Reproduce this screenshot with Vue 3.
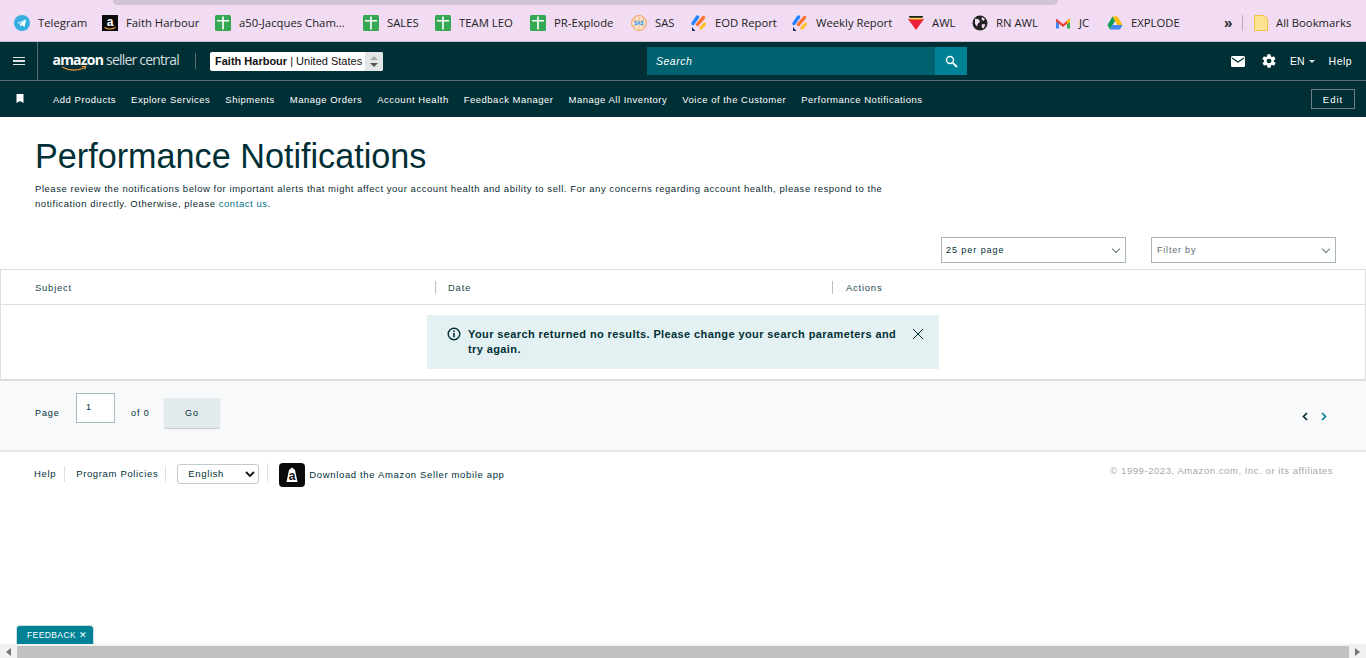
<template>
  <div class="page">
    <div class="bookmarks">
      <div class="tab-sliver"></div>
      <div class="bm-list">
        <a v-for="b in bookmarks" :key="b.name" class="bm" :style="{ width: b.w + 'px' }">
          <svg width="16" height="16" viewBox="0 0 16 16" class="bm-icon">
            <template v-if="b.icon === 'telegram'">
              <circle cx="8" cy="8" r="8" fill="#37aee2" />
              <path d="M3 8l9-3.600-1.400 7.600-2.900-2.100-1.400 1.500-.3-2.400 4.200-3.500-5.300 3.100z" fill="#fff" />
            </template>
            <template v-else-if="b.icon === 'amazon'">
              <rect width="16" height="16" fill="#0b0b0b" />
              <text x="8" y="11" text-anchor="middle" class="a-letter">a</text>
              <path d="M2.500 12.500q5.500 3 11 0" stroke="#f19e38" stroke-width="1.200" fill="none" />
            </template>
            <template v-else-if="b.icon === 'sheet'">
              <rect width="16" height="16" rx="1.500" fill="#34a853" />
              <path d="M2 5h12v1.600H2zM7.200 1.500h1.600v13H7.200z" fill="#fff" />
            </template>
            <template v-else-if="b.icon === 'sas'">
              <circle cx="8" cy="8" r="7.500" fill="#fbe3cf" stroke="#f2a766" />
              <path d="M1 6h14M1 10.500h14M8 .5v15M4 2q-2 6 0 12M12 2q2 6 0 12" stroke="#f2a766" stroke-width=".7" fill="none" />
              <rect x="2.500" y="6" width="11" height="4.500" fill="#dcecf7" />
              <text x="8" y="9.800" text-anchor="middle" class="sas-letter">SAS</text>
            </template>
            <template v-else-if="b.icon === 'eod'">
              <path d="M2 8.500L6.500 2" stroke="#2684ff" stroke-width="3.400" stroke-linecap="round" />
              <path d="M6.500 9.500L12.500 2.500" stroke="#ff6f2c" stroke-width="3.400" stroke-linecap="round" />
              <path d="M10 13L13.500 9" stroke="#ffc02e" stroke-width="3.400" stroke-linecap="round" />
              <path d="M1 12l3.500 4H1z" fill="#172b6b" />
            </template>
            <template v-else-if="b.icon === 'awl'">
              <path d="M1 1h14l-1 3H2z" fill="#222" />
              <path d="M0 4h16L8 15z" fill="#ee1f3b" />
              <path d="M2 2.800h12v1.700H2z" fill="#f7d84a" />
            </template>
            <template v-else-if="b.icon === 'globe'">
              <circle cx="8" cy="8" r="7.500" fill="#222" />
              <path d="M3 3.500l4 1 1 2.500-2 1.500-1 3-2-2.500zM10 2l3 2-1.500 2L9.500 4.500zM10 9l3.500.5-2 4-2-1.500z" fill="#f1dcf3" />
            </template>
            <template v-else-if="b.icon === 'gmail'">
              <path d="M1 3.500v10h3V7z" fill="#4285f4" />
              <path d="M15 3.500v10h-3V7z" fill="#34a853" />
              <path d="M1 3.500L8 9l7-5.500v3L8 12 1 6.500z" fill="#ea4335" />
              <path d="M12 5.500l3-2.200V7l-3 2.200z" fill="#fbbc04" />
            </template>
            <template v-else>
              <path d="M5.500 1.500h5L15.500 10h-5z" fill="#fbbc04" />
              <path d="M5.500 1.500L.5 10 3 14.500 8 6z" fill="#0f9d58" />
              <path d="M3 14.500h10l2.500-4.500h-10z" fill="#4285f4" />
            </template>
          </svg>
          <span>{{ b.name }}</span>
        </a>
      </div>
      <span class="bm-more">»</span>
      <span class="bm-divider"></span>
      <svg width="14" height="16" viewBox="0 0 14 16" class="bm-folder">
        <path d="M.5.500h9l4 3v12H.5z" fill="#fde293" stroke="#f0c544" />
      </svg>
      <span class="bm-all">All Bookmarks</span>
    </div>

    <header class="topbar">
      <div class="top-left">
        <button class="burger"><i></i><i></i><i></i></button>
        <div class="logo">
          <span class="logo-amazon">amazon</span>
          <span class="logo-rest">seller central</span>
          <svg class="logo-smile" width="26" height="6" viewBox="0 0 26 6">
            <path d="M1 1q11 6 23 .5" stroke="#f19e38" stroke-width="1.300" fill="none" />
            <path d="M21 .5l4-.2-1.300 3.200" stroke="#f19e38" stroke-width="1" fill="none" />
          </svg>
        </div>
        <span class="logo-sep"></span>
        <div class="account">
          <span class="account-text"><b>Faith Harbour</b> | United States</span>
          <span class="account-step">
            <svg width="10" height="13" viewBox="0 0 10 13">
              <path d="M5 1l4 4H1z" fill="#aaa" />
              <path d="M5 12l4-4H1z" fill="#555" />
            </svg>
          </span>
        </div>
      </div>
      <div class="search">
        <span class="search-input">Search</span>
        <button class="search-btn">
          <svg width="13" height="13" viewBox="0 0 13 13">
            <circle cx="5" cy="5" r="3.500" stroke="#fff" stroke-width="1.400" fill="none" />
            <path d="M7.800 7.800L12 12" stroke="#fff" stroke-width="1.800" />
          </svg>
        </button>
      </div>
      <div class="top-right">
        <svg width="14" height="11" viewBox="0 0 14 11">
          <rect width="14" height="11" rx="1.500" fill="#fff" />
          <path d="M1 2l6 4 6-4" stroke="#002f36" stroke-width="1.200" fill="none" />
        </svg>
        <svg class="gear" width="16" height="16" viewBox="0 0 24 24">
          <path fill="#fff" d="M19.400 13c.1-.3.100-.7.100-1s0-.7-.1-1l2.100-1.600c.2-.2.200-.4.100-.6l-2-3.500c-.1-.2-.4-.3-.6-.2l-2.500 1c-.5-.4-1.100-.7-1.700-1l-.4-2.600c0-.3-.2-.5-.5-.5h-4c-.3 0-.5.200-.5.500l-.4 2.600c-.6.300-1.200.6-1.700 1l-2.500-1c-.2-.1-.5 0-.6.200l-2 3.500c-.1.200-.1.400.1.600L4.600 11c-.1.300-.1.700-.1 1s0 .7.100 1l-2.100 1.600c-.2.200-.2.400-.1.600l2 3.500c.1.200.4.300.6.200l2.500-1c.5.400 1.100.7 1.700 1l.4 2.600c0 .3.200.5.500.5h4c.3 0 .5-.2.500-.5l.4-2.600c.6-.3 1.200-.6 1.700-1l2.500 1c.2.100.5 0 .6-.2l2-3.500c.1-.2.100-.4-.1-.6zM12 15.500a3.500 3.500 0 110-7 3.500 3.500 0 010 7z" />
        </svg>
        <span class="lang">EN<i class="caret"></i></span>
        <span class="help">Help</span>
      </div>
    </header>

    <nav class="subnav">
      <svg class="nav-mark" width="8" height="9" viewBox="0 0 8 9">
        <path d="M.5 0h7v9L4 7 .5 9z" fill="#fff" />
      </svg>
      <div class="nav-links">
        <a v-for="link in navLinks" :key="link">{{ link }}</a>
      </div>
      <button class="edit-btn">Edit</button>
    </nav>

    <main>
      <div class="intro">
        <h1>Performance Notifications</h1>
        <p>Please review the notifications below for important alerts that might affect your account health and ability to sell. For any concerns regarding account health, please respond to the notification directly. Otherwise, please <a>contact us</a>.</p>
      </div>

      <div class="filters">
        <div class="fake-select dark">25 per page<i class="chev"></i></div>
        <div class="fake-select">Filter by<i class="chev"></i></div>
      </div>

      <section class="table">
        <div class="thead">
          <div class="th first">Subject</div>
          <div class="th second">Date</div>
          <div class="th third">Actions</div>
        </div>
        <div class="tbody">
          <div class="alert">
            <svg class="alert-icon" width="14" height="14" viewBox="0 0 14 14">
              <circle cx="7" cy="7" r="5.800" stroke="#002f36" stroke-width="1.400" fill="none" />
              <rect x="6.200" y="6" width="1.600" height="4.200" fill="#002f36" />
              <rect x="6.200" y="3.400" width="1.600" height="1.600" fill="#002f36" />
            </svg>
            <p>Your search returned no results. Please change your search parameters and try again.</p>
            <svg class="alert-close" width="12" height="12" viewBox="0 0 12 12">
              <path d="M1 1l10 10M11 1L1 11" stroke="#002f36" stroke-width="1" />
            </svg>
          </div>
        </div>
      </section>

      <section class="pager">
        <span class="pg-label">Page</span>
        <span class="pg-input">1</span>
        <span class="pg-of">of 0</span>
        <button class="pg-go">Go</button>
        <span class="pg-arrows">
          <svg width="6" height="9" viewBox="0 0 6 9"><path d="M5 1L1.500 4.500 5 8" stroke="#002f36" stroke-width="1.700" fill="none" /></svg>
          <svg width="6" height="9" viewBox="0 0 6 9"><path d="M1 1l3.500 3.500L1 8" stroke="#008296" stroke-width="1.700" fill="none" /></svg>
        </span>
      </section>

      <footer class="foot">
        <a class="f-help">Help</a>
        <a class="f-policy">Program Policies</a>
        <div class="f-lang">English
          <svg width="10" height="6" viewBox="0 0 10 6"><path d="M1 1l4 4 4-4" stroke="#111" stroke-width="1.800" fill="none" /></svg>
        </div>
        <span class="f-app">
          <svg width="12" height="16" viewBox="0 0 12 16"><path d="M3 3l3-2.500L9 3l2.500 12h-11z" fill="#fff" /></svg>
          <b>a</b>
        </span>
        <a class="f-download">Download the Amazon Seller mobile app</a>
        <span class="f-copy">© 1999-2023, Amazon.com, Inc. or its affiliates</span>
      </footer>
    </main>

    <div class="feedback">FEEDBACK <span>✕</span></div>
    <div class="hscroll">
      <span class="arrow left"></span>
      <span class="thumb"></span>
      <span class="arrow right"></span>
    </div>
  </div>
</template>

<script setup>
const bookmarks = [
  { name: 'Telegram', icon: 'telegram', w: 88 },
  { name: 'Faith Harbour', icon: 'amazon', w: 113 },
  { name: 'a50-Jacques Cham...', icon: 'sheet', w: 148 },
  { name: 'SALES', icon: 'sheet', w: 72 },
  { name: 'TEAM LEO', icon: 'sheet', w: 95 },
  { name: 'PR-Explode', icon: 'sheet', w: 101 },
  { name: 'SAS', icon: 'sas', w: 60 },
  { name: 'EOD Report', icon: 'eod', w: 101 },
  { name: 'Weekly Report', icon: 'eod', w: 116 },
  { name: 'AWL', icon: 'awl', w: 64 },
  { name: 'RN AWL', icon: 'globe', w: 83 },
  { name: 'JC', icon: 'gmail', w: 52 },
  { name: 'EXPLODE', icon: 'drive', w: 90 },
]

const navLinks = [
  'Add Products',
  'Explore Services',
  'Shipments',
  'Manage Orders',
  'Account Health',
  'Feedback Manager',
  'Manage All Inventory',
  'Voice of the Customer',
  'Performance Notifications',
]
</script>

<style>
html,
body {
  margin: 0;
  background: #fff;
}
</style>

<style scoped>
.page {
  position: relative;
  height: 658px;
  overflow: hidden;
  font-family: "Liberation Sans", Arial, sans-serif;
  color: #002f36;
}

/* browser bookmarks bar */
.bookmarks {
  position: relative;
  display: flex;
  align-items: center;
  height: 42px;
  padding: 4px 0 0 14px;
  box-sizing: border-box;
  background: #f1dcf3;
  border-bottom: 1px solid #cdbbd0;
  font-family: "Open Sans", sans-serif;
  font-size: 11.300px;
  color: #222;
  white-space: nowrap;
}
.tab-sliver {
  position: absolute;
  left: 113px;
  top: 0;
  width: 945px;
  height: 5px;
  background: #d3c3d6;
  border-radius: 0 0 10px 10px;
}
.bm-list {
  display: flex;
  width: 1210px;
}
.bm {
  display: flex;
  align-items: center;
  gap: 8px;
}
.bm-icon {
  flex: none;
}
.a-letter {
  font: bold 12px "Liberation Sans", sans-serif;
  fill: #fff;
}
.sas-letter {
  font: bold 4.500px "Liberation Sans", sans-serif;
  fill: #1d7fc4;
}
.bm-more {
  font-size: 14px;
  font-weight: 700;
  line-height: 16px;
  width: 18px;
  color: #333;
}
.bm-divider {
  width: 1px;
  height: 16px;
  background: #b9adbb;
  margin-right: 11px;
}
.bm-folder {
  margin-right: 8px;
}

/* seller central header */
.topbar {
  display: flex;
  align-items: center;
  height: 38px;
  background: #002f36;
  border-bottom: 1px solid #596e72;
  color: #fff;
}
.top-left {
  display: flex;
  align-items: center;
  width: 647px;
  height: 100%;
}
.burger {
  display: flex;
  flex-direction: column;
  justify-content: center;
  gap: 2px;
  width: 38px;
  height: 100%;
  padding: 0 13px;
  box-sizing: border-box;
  background: none;
  border: 0;
  border-right: 1px solid #596e72;
}
.burger i {
  display: block;
  height: 1.500px;
  width: 12px;
  background: #dfe5e5;
}
.logo {
  position: relative;
  margin-left: 14.500px;
  width: 128.500px;
  font-family: "Open Sans", sans-serif;
  font-size: 14px;
  line-height: 20px;
  white-space: nowrap;
  margin-top: -3px;
  letter-spacing: -0.8px;
}
.logo-amazon {
  font-weight: 700;
  margin-right: 3px;
}
.logo-rest {
  color: #d5dcdd;
}
.logo-smile {
  position: absolute;
  left: 8px;
  top: 16px;
}
.logo-sep {
  width: 1px;
  height: 16px;
  background: #596e72;
  margin: 0 14px;
}
.account {
  display: flex;
  align-items: stretch;
  width: 173px;
  height: 19px;
  background: #fff;
  border-radius: 2px;
  color: #111;
  font-size: 11px;
  line-height: 19px;
  overflow: hidden;
}
.account-text {
  flex: 1;
  padding-left: 5px;
  white-space: nowrap;
}
.account-step {
  display: flex;
  align-items: center;
  justify-content: center;
  width: 18px;
  background: #e3e6e6;
}
.search {
  display: flex;
  width: 320px;
  height: 28px;
}
.search-input {
  flex: 1;
  padding-left: 9px;
  background: #00626f;
  font-size: 10.500px;
  font-style: italic;
  line-height: 28px;
  letter-spacing: .5px;
}
.search-btn {
  display: flex;
  align-items: center;
  justify-content: center;
  width: 32px;
  padding: 0;
  border: 0;
  background: #008296;
}
.top-right {
  display: flex;
  align-items: center;
  margin-left: 264px;
  font-size: 10.500px;
}
.gear {
  margin-left: 16px;
}
.lang {
  display: flex;
  align-items: center;
  margin-left: 13px;
  gap: 4px;
}
.caret {
  width: 0;
  height: 0;
  border: 3.500px solid transparent;
  border-top: 3.500px solid #dfe5e5;
  border-bottom: 0;
}
.help {
  margin-left: 14px;
  letter-spacing: .5px;
}

/* sub navigation */
.subnav {
  display: flex;
  align-items: center;
  height: 36px;
  background: #002f36;
  color: #fff;
  font-size: 9.500px;
  letter-spacing: .5px;
  white-space: nowrap;
}
.nav-mark {
  margin-left: 16px;
  margin-top: -2px;
}
.nav-links {
  display: flex;
  gap: 15px;
  margin-left: 29px;
  flex: 1;
}
.edit-btn {
  width: 44px;
  height: 20px;
  margin-right: 11px;
  padding: 0;
  background: none;
  border: 1px solid #6f8083;
  color: #fff;
  font-family: inherit;
  font-size: 9.500px;
  letter-spacing: 1px;
}

/* page content */
.intro {
  padding: 18px 0 0 35px;
  width: 860px;
}
h1 {
  margin: 0;
  font-size: 34.200px;
  font-weight: 400;
  line-height: 42px;
  color: #002f36;
}
.intro p {
  margin: 4px 0 0;
  font-size: 9.500px;
  line-height: 15px;
  letter-spacing: .545px;
  color: #0b2b30;
}
.intro p a {
  color: #007185;
}
.filters {
  display: flex;
  justify-content: flex-end;
  gap: 25px;
  padding: 26px 30px 0 0;
}
.fake-select {
  position: relative;
  width: 185px;
  height: 26px;
  box-sizing: border-box;
  padding-left: 5px;
  border: 1px solid #a9b6b8;
  font-size: 9px;
  line-height: 24px;
  letter-spacing: .8px;
  color: #5d6d70;
}
.fake-select.dark {
  padding-left: 4px;
  letter-spacing: .95px;
  color: #002f36;
}
.chev {
  position: absolute;
  right: 6px;
  top: 8px;
  width: 5px;
  height: 5px;
  border-right: 1px solid #66777a;
  border-bottom: 1px solid #66777a;
  transform: rotate(45deg);
}
.table {
  margin-top: 6px;
  border: 1px solid #dcdfe0;
  border-bottom-width: 2px;
}
.thead {
  display: grid;
  grid-template-columns: 434px 397px 1fr;
  align-items: center;
  height: 34px;
  border-bottom: 1px solid #dcdfe0;
  font-size: 9.500px;
  letter-spacing: .75px;
  color: #23474c;
}
.th {
  height: 13px;
  line-height: 13px;
  border-left: 1px solid #b9c3c4;
  padding-left: 12px;
}
.th.first {
  border-left: 0;
  padding-left: 34px;
}
.th.third {
  padding-left: 13px;
}
.tbody {
  padding: 10px 0 10px 426px;
}
.alert {
  display: flex;
  align-items: flex-start;
  width: 512px;
  height: 54px;
  box-sizing: border-box;
  padding: 12px 15px 0 20px;
  background: #e3f1f2;
}
.alert-icon {
  flex: none;
  margin-right: 7px;
}
.alert p {
  margin: 0;
  flex: 1;
  font-size: 11px;
  font-weight: 700;
  line-height: 15px;
  letter-spacing: .4px;
  color: #002f36;
}
.alert-close {
  flex: none;
  margin: 1px 0 0 10px;
}
.pager {
  display: flex;
  align-items: flex-start;
  height: 71px;
  box-sizing: border-box;
  padding: 12px 0 0 35px;
  background: #f8f9fb;
  border-bottom: 2px solid #e3e6ea;
  font-size: 9px;
  letter-spacing: .9px;
}
.pg-label {
  margin-top: 15px;
  width: 41px;
}
.pg-input {
  width: 39px;
  height: 30px;
  box-sizing: border-box;
  padding: 8px 0 0 9px;
  background: #fff;
  border: 1px solid #a9bcbd;
}
.pg-of {
  margin: 15px 0 0 16px;
  width: 33px;
}
.pg-go {
  width: 56px;
  height: 30px;
  margin-top: 5px;
  padding: 0;
  border: 0;
  border-radius: 2px;
  background: #e3eaeb;
  box-shadow: 0 1px 1px rgba(0, 0, 0, .2);
  font-family: inherit;
  font-size: 9px;
  letter-spacing: .9px;
  color: #002f36;
}
.pg-arrows {
  display: flex;
  gap: 13px;
  margin: 19px 0 0 1082px;
}
.foot {
  display: flex;
  align-items: center;
  height: 44px;
  padding: 0 33px 0 34px;
  font-size: 9.500px;
  letter-spacing: .65px;
  color: #002f36;
  white-space: nowrap;
}
.f-help {
  padding-right: 8px;
  border-right: 1px solid #dfe2e3;
  line-height: 16px;
}
.f-policy {
  margin-left: 11px;
  padding-right: 7px;
  border-right: 1px solid #dfe2e3;
  line-height: 16px;
}
.f-lang {
  display: flex;
  align-items: center;
  justify-content: space-between;
  width: 82px;
  height: 20px;
  margin: -1px 0 0 11px;
  padding: 0 3px 0 10px;
  box-sizing: border-box;
  border: 1px solid #c4cacb;
  border-radius: 3px;
}
.f-app {
  position: relative;
  display: flex;
  align-items: center;
  justify-content: center;
  width: 26px;
  height: 24px;
  margin: 2px 0 0 20px;
  border-radius: 4px;
  background: #0b0b0b;
}
.f-app b {
  position: absolute;
  top: 6px;
  font-size: 12px;
  color: #111;
}
.f-app::before {
  content: "";
  position: absolute;
  left: -12px;
  top: 0;
  width: 1px;
  height: 20px;
  background: #dfe2e3;
}
.f-download {
  margin-left: 4px;
}
.f-copy {
  margin-left: auto;
  margin-top: -8px;
  letter-spacing: .56px;
  color: #a5a8a9;
}

/* overlays at the bottom of the window */
.feedback {
  position: absolute;
  left: 16px;
  bottom: 14px;
  width: 78px;
  height: 19px;
  box-sizing: border-box;
  padding-left: 10px;
  background: #008296;
  border: 1px solid #cfe0e3;
  border-bottom: 0;
  border-radius: 4px 4px 0 0;
  color: #fff;
  font-size: 8.500px;
  line-height: 18px;
  letter-spacing: .4px;
}
.hscroll {
  position: absolute;
  left: 0;
  right: 0;
  bottom: 0;
  display: flex;
  align-items: flex-end;
  height: 14px;
  background: #f1f1f1;
}
.thumb {
  flex: 1;
  height: 12px;
  background: #c1c1c1;
}
.arrow {
  width: 17px;
  height: 12px;
  display: flex;
  align-items: center;
  justify-content: center;
}
.arrow::before {
  content: "";
  border: 4px solid transparent;
}
.arrow.left::before {
  border-left: 0;
  border-right: 5px solid #777;
}
.arrow.right::before {
  border-right: 0;
  border-left: 5px solid #777;
}
</style>
